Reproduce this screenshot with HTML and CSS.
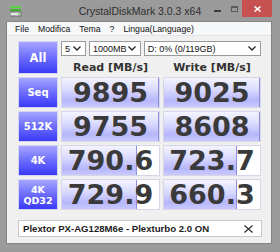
FILE: index.html
```html
<!DOCTYPE html>
<html lang="it">
<head>
  <meta charset="UTF-8" />
  <title>CrystalDiskMark 3.0.3 x64</title>
  <link rel="stylesheet" href="styles.css">
</head>
<body>

  <div class="window">

    <!-- Title bar -->
    <div class="titlebar">
      <svg class="app-icon" width="12" height="11" viewBox="0 0 12 11">
        <rect x="0" y="0" width="11" height="2" fill="#5fd04a"/>
        <rect x="0" y="3" width="11" height="2" fill="#3fb52c"/>
        <rect x="0" y="6" width="11" height="4" fill="#e8e8e8" stroke="#6a6a6a" stroke-width="1"/>
        <rect x="8" y="7.5" width="2" height="1" fill="#3fb52c"/>
      </svg>
      <div class="title">CrystalDiskMark 3.0.3 x64</div>
      <div class="controls">
        <span class="ctl min"><i></i></span>
        <span class="ctl max"><i></i></span>
        <span class="ctl close">
          <svg width="7" height="6" viewBox="0 0 7 6"><path d="M0.5 0.5 L6.5 5.5 M6.5 0.5 L0.5 5.5" stroke="#fff" stroke-width="1.6"/></svg>
        </span>
      </div>
    </div>

    <div class="client">

      <!-- Menu -->
      <ul class="menu">
        <li>File</li>
        <li>Modifica</li>
        <li>Tema</li>
        <li>?</li>
        <li>Lingua(Language)</li>
      </ul>

      <div class="panel">
        <div class="grid">
          <div class="btn all">All</div>
          <div class="selects">
            <div class="combo c-count"><span>5</span><svg width="8" height="5" viewBox="0 0 8 5"><path d="M0.5 0.5 L4 4 L7.5 0.5" fill="none" stroke="#222" stroke-width="1.3"/></svg></div>
            <div class="combo c-size"><span>1000MB</span><svg width="8" height="5" viewBox="0 0 8 5"><path d="M0.5 0.5 L4 4 L7.5 0.5" fill="none" stroke="#222" stroke-width="1.3"/></svg></div>
            <div class="combo c-drive"><span>D: 0% (0/119GB)</span><svg width="8" height="5" viewBox="0 0 8 5"><path d="M0.5 0.5 L4 4 L7.5 0.5" fill="none" stroke="#222" stroke-width="1.3"/></svg></div>
          </div>
          <div class="head">Read [MB/s]</div>
          <div class="head">Write [MB/s]</div>

          <div class="btn">Seq</div>
          <div class="val" style="--fill:100%">9895</div>
          <div class="val" style="--fill:100%">9025</div>

          <div class="btn">512K</div>
          <div class="val" style="--fill:100%">9755</div>
          <div class="val" style="--fill:100%">8608</div>

          <div class="btn">4K</div>
          <div class="val" style="--fill:77%">790.6</div>
          <div class="val" style="--fill:76%">723.7</div>

          <div class="btn two">4K<br>QD32</div>
          <div class="val" style="--fill:77%">729.9</div>
          <div class="val" style="--fill:76%">660.3</div>
        </div>

        <!-- Comment -->
        <div class="comment">
          <span>Plextor PX-AG128M6e - Plexturbo 2.0 ON</span>
          <svg width="9" height="8" viewBox="0 0 9 8"><path d="M0.5 0.5 L8.5 7.5 M8.5 0.5 L0.5 7.5" stroke="#333" stroke-width="1.3"/></svg>
        </div>
      </div>
    </div>
  </div>

</body>
</html>
```

FILE: styles.css
```css
* { margin: 0; padding: 0; box-sizing: border-box; }
body { width: 280px; height: 252px; overflow: hidden; background: #9b9b9b; font-family: 'Liberation Sans', Arial, sans-serif; }

.window { height: 252px; display: flex; flex-direction: column; background: #9b9b9b; }

/* title bar */
.titlebar { height: 22px; flex: none; display: grid; grid-template-columns: 1fr auto 1fr; align-items: start; }
.app-icon { margin: 6px 0 0 10px; }
.title { font-size: 10.5px; color: #2e2e2e; padding-top: 5px; white-space: nowrap; }
.controls { justify-self: end; display: flex; margin-right: 8px; }
.ctl { height: 17px; display: flex; align-items: center; justify-content: center; }
.ctl.min { width: 18px; }
.ctl.min i { width: 7px; height: 2px; background: #3c3c3c; margin-top: 5px; }
.ctl.max { width: 16px; }
.ctl.max i { width: 7px; height: 6px; border: 1px solid #5a5a5a; border-top-width: 2px; }
.ctl.close { width: 30px; background: #c75050; }

/* client area */
.client { flex: 1; margin: 0 9px 9px 7px; background: #f0f0f0; display: flex; flex-direction: column; box-shadow: 0 0 0 1px #858585; }

.menu { list-style: none; height: 14px; flex: none; display: flex; gap: 9px; padding-left: 8px; background: #f6f7f8; border-bottom: 1px solid #e2e2e2; font-size: 8.7px; color: #111; line-height: 14px; }

.panel { padding: 5px 0 0 11px; }

.grid { display: grid; grid-template-columns: 40px 99px 98px; grid-template-rows: 15px 15px repeat(4, 31px); gap: 3px; }

.btn {
  display: flex; align-items: center; justify-content: center; text-align: center;
  font-family: 'DejaVu Sans', sans-serif; font-weight: bold; font-size: 10px; color: #fff;
  background: linear-gradient(#a6a6ff, #6c6cff 50%, #3a3af6);
  border: 1px solid #d4d4f4;
}
.btn.all { grid-row: 1 / 3; font-size: 11.5px; }
.btn.two { font-size: 9.5px; line-height: 11px; }

.selects { grid-column: 2 / 4; display: flex; gap: 3px; }
.combo {
  height: 15px; display: flex; align-items: center; justify-content: space-between;
  padding: 0 4px 0 3px; background: #fff; border: 1px solid #9a9a9a;
  font-size: 9px; color: #111;
}
.c-count { width: 25px; }
.c-size { width: 52px; }
.c-drive { width: 118px; }

.head { font-family: 'DejaVu Sans', sans-serif; font-weight: bold; font-size: 11px; color: #333; text-align: center; line-height: 17px; }

.val {
  display: flex; align-items: center; justify-content: center;
  font-family: 'DejaVu Sans', sans-serif; font-weight: bold; font-size: 27px; color: #3a3a3a;
  border: 1px solid #d6d6e6;
  background:
    linear-gradient(to right, transparent calc(var(--fill) - 1px), #8c8ce0 calc(var(--fill) - 1px), #8c8ce0 var(--fill), transparent var(--fill)),
    linear-gradient(#f4f4ff, #dadaff 40%, #b6b6fb 78%, #cacaff) no-repeat 0 0 / var(--fill) 100%,
    #fff;
}

.comment {
  margin-top: 10px; width: 244px; height: 17px;
  display: flex; align-items: center; justify-content: space-between;
  padding: 0 8px 0 4px; background: #fff; border: 1px solid #c8c8c8;
  font-weight: bold; font-size: 9.6px; color: #222;
}
```
